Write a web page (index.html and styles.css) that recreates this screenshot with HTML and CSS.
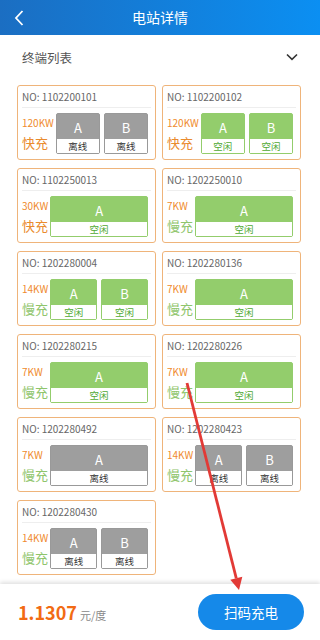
FILE: index.html
```html
<!DOCTYPE html>
<html lang="zh-CN">
<head>
<meta charset="UTF-8">
<meta name="viewport" content="width=device-width, initial-scale=1.0">
<title>电站详情</title>
<link rel="stylesheet" href="styles.css">
</head>
<body>
<div class="app">
  <header class="topbar">
    <svg class="back" width="10" height="16" viewBox="0 0 10 16"><path d="M8.5 1 L2 8 L8.5 15" fill="none" stroke="#fff" stroke-width="1.8"/></svg>
    <h1>电站详情</h1>
    <span></span>
  </header>

  <main class="content">
    <div class="section-head">
      <span>终端列表</span>
      <svg width="12" height="8" viewBox="0 0 12 8"><path d="M1 1.5 L6 6.3 L11 1.5" fill="none" stroke="#333" stroke-width="1.6"/></svg>
    </div>

    <div class="grid">
      <div class="card">
        <div class="no">NO: 1102200101</div>
        <div class="body">
          <div class="label"><span class="kw">120KW</span><span class="type fast">快充</span></div>
          <div class="guns">
            <div class="gun off"><div class="letter">A</div><div class="state">离线</div></div>
            <div class="gun off"><div class="letter">B</div><div class="state">离线</div></div>
          </div>
        </div>
      </div>

      <div class="card">
        <div class="no">NO: 1102200102</div>
        <div class="body">
          <div class="label"><span class="kw">120KW</span><span class="type fast">快充</span></div>
          <div class="guns">
            <div class="gun free"><div class="letter">A</div><div class="state">空闲</div></div>
            <div class="gun free"><div class="letter">B</div><div class="state">空闲</div></div>
          </div>
        </div>
      </div>

      <div class="card">
        <div class="no">NO: 1102250013</div>
        <div class="body">
          <div class="label"><span class="kw">30KW</span><span class="type fast">快充</span></div>
          <div class="guns">
            <div class="gun free"><div class="letter">A</div><div class="state">空闲</div></div>
          </div>
        </div>
      </div>

      <div class="card">
        <div class="no">NO: 1202250010</div>
        <div class="body">
          <div class="label"><span class="kw">7KW</span><span class="type slow">慢充</span></div>
          <div class="guns">
            <div class="gun free"><div class="letter">A</div><div class="state">空闲</div></div>
          </div>
        </div>
      </div>

      <div class="card">
        <div class="no">NO: 1202280004</div>
        <div class="body">
          <div class="label"><span class="kw">14KW</span><span class="type slow">慢充</span></div>
          <div class="guns">
            <div class="gun free"><div class="letter">A</div><div class="state">空闲</div></div>
            <div class="gun free"><div class="letter">B</div><div class="state">空闲</div></div>
          </div>
        </div>
      </div>

      <div class="card">
        <div class="no">NO: 1202280136</div>
        <div class="body">
          <div class="label"><span class="kw">7KW</span><span class="type slow">慢充</span></div>
          <div class="guns">
            <div class="gun free"><div class="letter">A</div><div class="state">空闲</div></div>
          </div>
        </div>
      </div>

      <div class="card">
        <div class="no">NO: 1202280215</div>
        <div class="body">
          <div class="label"><span class="kw">7KW</span><span class="type slow">慢充</span></div>
          <div class="guns">
            <div class="gun free"><div class="letter">A</div><div class="state">空闲</div></div>
          </div>
        </div>
      </div>

      <div class="card">
        <div class="no">NO: 1202280226</div>
        <div class="body">
          <div class="label"><span class="kw">7KW</span><span class="type slow">慢充</span></div>
          <div class="guns">
            <div class="gun free"><div class="letter">A</div><div class="state">空闲</div></div>
          </div>
        </div>
      </div>

      <div class="card">
        <div class="no">NO: 1202280492</div>
        <div class="body">
          <div class="label"><span class="kw">7KW</span><span class="type slow">慢充</span></div>
          <div class="guns">
            <div class="gun off"><div class="letter">A</div><div class="state">离线</div></div>
          </div>
        </div>
      </div>

      <div class="card">
        <div class="no">NO: 1202280423</div>
        <div class="body">
          <div class="label"><span class="kw">14KW</span><span class="type slow">慢充</span></div>
          <div class="guns">
            <div class="gun off"><div class="letter">A</div><div class="state">离线</div></div>
            <div class="gun off"><div class="letter">B</div><div class="state">离线</div></div>
          </div>
        </div>
      </div>

      <div class="card">
        <div class="no">NO: 1202280430</div>
        <div class="body">
          <div class="label"><span class="kw">14KW</span><span class="type slow">慢充</span></div>
          <div class="guns">
            <div class="gun off"><div class="letter">A</div><div class="state">离线</div></div>
            <div class="gun off"><div class="letter">B</div><div class="state">离线</div></div>
          </div>
        </div>
      </div>
    </div>
  </main>

  <footer class="paybar">
    <div class="price"><b>1.1307</b><span>元/度</span></div>
    <button class="scan">扫码充电</button>
  </footer>

  <!-- annotation arrow drawn over the screen -->
  <svg class="annot" width="320" height="640" viewBox="0 0 320 640">
    <line x1="187" y1="383" x2="236.3" y2="578.3" stroke="#e23a36" stroke-width="2.8"/>
    <polygon points="239,590 242.3,576.8 230.3,579.8" fill="#e23a36"/>
  </svg>
</div>
</body>
</html>
```

FILE: styles.css
```css
* {
  margin: 0;
  padding: 0;
  box-sizing: border-box;
  font-family: "Noto Sans CJK SC", "Noto Sans", sans-serif;
}

body {
  background: #fff;
}

.app {
  position: relative;
  width: 320px;
  height: 640px;
  display: flex;
  flex-direction: column;
  overflow: hidden;
}

.topbar {
  height: 35px;
  display: grid;
  grid-template-columns: 40px 1fr 40px;
  align-items: center;
  background: linear-gradient(90deg, #1b6ec2, #0b8ff2);
  color: #fff;
}

.topbar .back {
  margin-left: 14px;
}

.topbar h1 {
  font-size: 14px;
  font-weight: 400;
  text-align: center;
  line-height: 35px;
}

.content {
  flex: 1;
  overflow: hidden;
}

.section-head {
  height: 44px;
  display: flex;
  align-items: center;
  justify-content: space-between;
  padding: 0 22px;
  font-size: 12.5px;
  color: #555;
}

.grid {
  display: grid;
  grid-template-columns: 139px 139px;
  gap: 8px 6px;
  padding: 6px 0 0 17px;
}

.card {
  height: 75px;
  border: 1px solid #efb47a;
  border-radius: 3px;
  padding: 0 4px 5px 4px;
  background: #fff;
}

.no {
  height: 22px;
  line-height: 22px;
  font-size: 10px;
  color: #666;
  border-bottom: 1px solid #eee;
}

.body {
  display: flex;
  margin-top: 5px;
  padding-right: 3px;
  gap: 2px;
}

.label {
  min-width: 24px;
  display: flex;
  flex-direction: column;
}

.kw {
  height: 20px;
  line-height: 20px;
  font-size: 10px;
  color: #ef8a2d;
}

.type {
  height: 20px;
  line-height: 20px;
  font-size: 13px;
}

.fast {
  color: #ea8b2e;
}

.slow {
  color: #8fc56c;
}

.guns {
  flex: 1;
  display: flex;
  gap: 4px;
}

.gun {
  flex: 1;
  height: 41px;
  border: 1px solid;
  border-radius: 2px;
  display: flex;
  flex-direction: column;
}

.gun .letter {
  height: 25px;
  line-height: 27px;
  text-align: center;
  color: #fff;
  font-size: 13px;
}

.gun .state {
  flex: 1;
  background: #fff;
  text-align: center;
  font-size: 9.5px;
  line-height: 14px;
}

.gun.off {
  border-color: #999;
  background: #9e9e9e;
}

.gun.off .state {
  color: #333;
}

.gun.free {
  border-color: #93cd6c;
  background: #93cd6c;
}

.gun.free .state {
  color: #4fa933;
}

.paybar {
  position: relative;
  height: 56px;
  display: flex;
  align-items: center;
  justify-content: space-between;
  padding: 0 16px 0 18px;
  background: #fff;
  box-shadow: 0 -2px 4px rgba(0, 0, 0, 0.12);
}

.price b {
  font-size: 18px;
  font-weight: 700;
  color: #f26b14;
}

.price span {
  margin-left: 3px;
  font-size: 11px;
  color: #888;
}

.scan {
  width: 106px;
  height: 36px;
  border: none;
  border-radius: 18px;
  background: #1589e9;
  color: #fff;
  font-size: 13.5px;
}

.annot {
  position: absolute;
  top: 0;
  left: 0;
  pointer-events: none;
}
```
